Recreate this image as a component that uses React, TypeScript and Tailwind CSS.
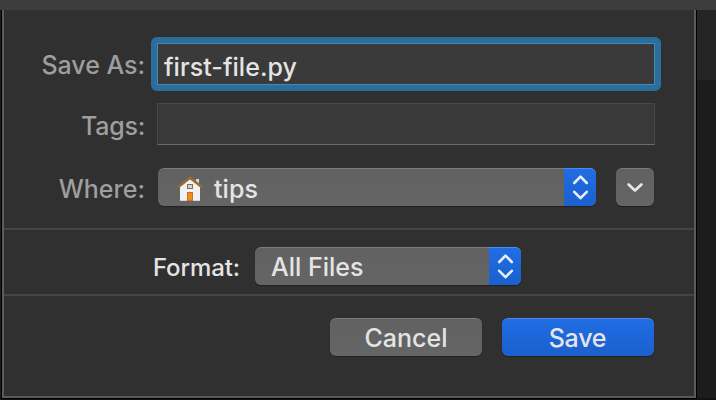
import type { ReactNode } from "react";

const BUTTON_BASE =
  "flex h-[38px] items-center rounded-[6px] shadow-[0_1px_1px_rgba(0,0,0,0.35)]";
const GREY =
  "bg-linear-to-b from-[#616161] to-[#656565] border-t border-[#7b7b7b]";
const BLUE =
  "bg-linear-to-b from-[#206de4] to-[#1b60cd] border-t border-[#4a8bef]";

function Label({ children, className = "" }: { children: ReactNode; className?: string }) {
  return (
    <span className={`block w-[141px] shrink-0 text-right text-[#9e9e9e] ${className}`}>
      {children}
    </span>
  );
}

function HomeIcon() {
  return (
    <svg width="28" height="29" viewBox="0 0 28 29" className="shrink-0">
      <rect x="20" y="6" width="3" height="6" fill="#d5d8dc" />
      <path d="M4 14 13.9 6 24 14V28H4Z" fill="#f1f1f3" />
      <path d="M4 27.5h20" stroke="#d4d4d4" strokeWidth="1" />
      <path d="M1.8 14.2 14 4.8 26.2 14.2" fill="none" stroke="#98693b" strokeWidth="2.5" />
      <rect x="11.5" y="11.5" width="5" height="4" fill="#b9d5ea" stroke="#96693f" strokeWidth="1" />
      <rect x="11.5" y="19.5" width="5" height="8" fill="#ee8a1e" stroke="#c9701c" strokeWidth="1" />
    </svg>
  );
}

function Stepper() {
  return (
    <span className={`-mt-px flex h-[38px] w-8 shrink-0 items-center justify-center rounded-r-[6px] ${BLUE}`}>
      <svg width="32" height="37" viewBox="0 0 32 37" fill="none" stroke="#e6eefb" strokeWidth="2.6" strokeLinecap="round" strokeLinejoin="round">
        <path d="M10.2 14 16.5 7.6 22.8 14M10.2 22.8 16.5 29.2 22.8 22.8" />
      </svg>
    </span>
  );
}

export default function App() {
  return (
    <div className="flex h-[400px] w-[716px] flex-col overflow-hidden bg-[#141314] font-['Inter','Liberation_Sans',sans-serif] text-[25px] leading-[30px] font-medium text-[#e4e4e4]">
      <div className="h-[10px] shrink-0 bg-[#3d3d3d]" />
      <div className="flex h-[390px]">
        <div className="h-[389px] w-px bg-[#1b1b1b]" />
        <div className="flex h-[389px] w-[696px] flex-col border-x border-b border-black">
          <div className="flex h-full flex-col border-x-2 border-b-2 border-[#5b5b5b] bg-[#303030]">
            <div className="flex h-[218px] shrink-0 flex-col pt-[27px]">
              <div className="flex h-[54px] items-center">
                <Label className="pt-[2px] tracking-[-0.05px]">Save As:</Label>
                <div className="ml-[6px] h-[54px] w-[510px] rounded-[6px] bg-[#2c6e9b] p-[6px]">
                  <div className="flex h-[42px] items-center border border-[#4488b3] bg-[#3a3a3a] pt-[6px] pl-[6px]">
                    <span className="tracking-[0.05px]">first-file.py</span>
                  </div>
                </div>
              </div>
              <div className="mt-[12px] flex h-[42px] items-center">
                <Label className="pt-[4px] tracking-[-0.25px]">Tags:</Label>
                <div className="ml-[12px] h-[42px] w-[498px] border border-[#484848] border-b-[#6c6c6c] bg-[#393939]" />
              </div>
              <div className="mt-[23px] flex h-[38px] items-center">
                <Label className="pt-[4px]">Where:</Label>
                <div className={`ml-[13px] w-[438px] ${BUTTON_BASE} ${GREY}`}>
                  <span className="flex flex-1 items-center gap-[10px] pl-[18px]">
                    <HomeIcon />
                    <span className="pt-[2px] tracking-[0.1px]">tips</span>
                  </span>
                  <Stepper />
                </div>
                <div className={`ml-5 w-[38px] ${BUTTON_BASE} ${GREY}`}>
                  <svg width="38" height="37" viewBox="0 0 38 37" fill="none" stroke="#e6e6e6" strokeWidth="2.8" strokeLinecap="round" strokeLinejoin="round">
                    <path d="M12.6 15.4 19 21.4 25.4 15.4" />
                  </svg>
                </div>
              </div>
            </div>
            <div className="flex h-[68px] shrink-0 items-start border-y-2 border-[#454545] pt-[17px]">
              <span className="w-[236px] shrink-0 pt-[6px] text-right text-[24px] tracking-[-0.1px]">Format:</span>
              <div className={`ml-[15px] w-[266px] ${BUTTON_BASE} ${GREY}`}>
                <span className="flex-1 pt-[1px] pl-[16px]">All Files</span>
                <Stepper />
              </div>
            </div>
            <div className="flex justify-end gap-5 pt-[22px] pr-[40px]">
              <div className={`w-[152px] justify-center ${BUTTON_BASE} ${GREY}`}>
                <span className="pt-[1px]">Cancel</span>
              </div>
              <div className={`w-[152px] justify-center ${BUTTON_BASE} ${BLUE}`}>
                <span className="pt-[1px] pr-px tracking-[-0.25px]">Save</span>
              </div>
            </div>
          </div>
        </div>
        <div className="flex h-[388px] flex-1 flex-col bg-[#1c1c1c]">
          <div className="h-[70px] bg-[#252525]" />
        </div>
      </div>
    </div>
  );
}
